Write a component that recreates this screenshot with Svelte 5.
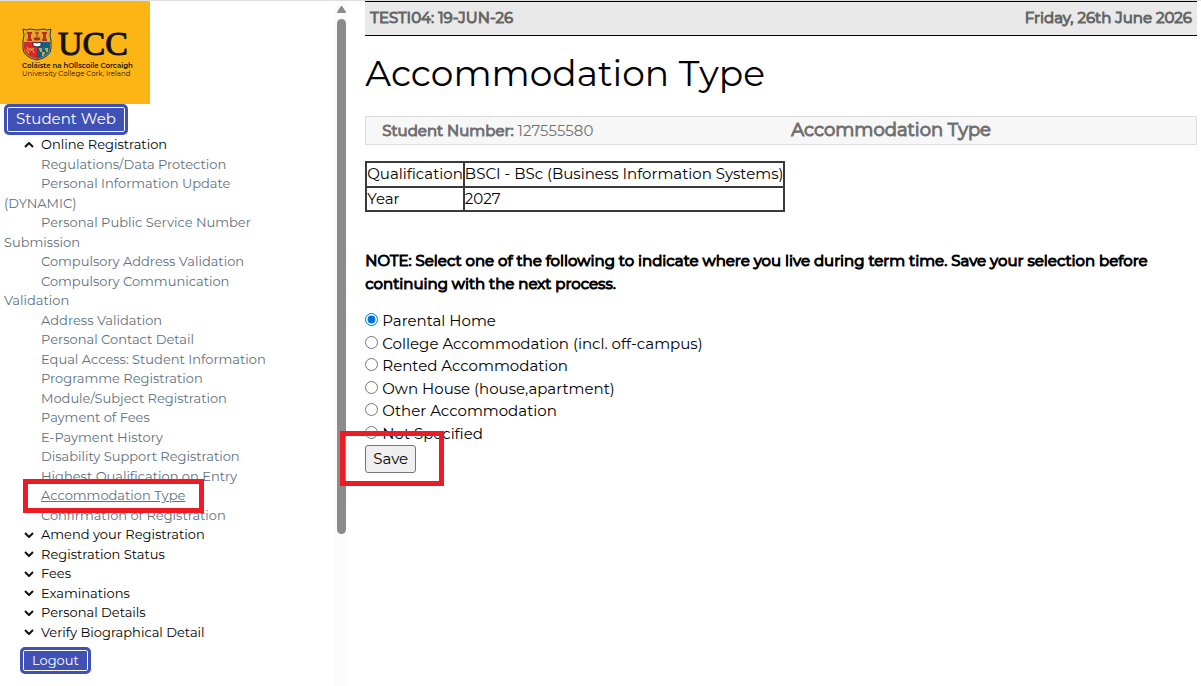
<script lang="ts">
	const steps: string[] = [
		'Regulations/Data Protection',
		'Personal Information Update (DYNAMIC)',
		'Personal Public Service Number Submission',
		'Compulsory Address Validation',
		'Compulsory Communication Validation',
		'Address Validation',
		'Personal Contact Detail',
		'Equal Access: Student Information',
		'Programme Registration',
		'Module/Subject Registration',
		'Payment of Fees',
		'E-Payment History',
		'Disability Support Registration',
		'Highest Qualification on Entry',
		'Accommodation Type',
		'Confirmation of Registration'
	];

	const sections: { title: string; items: string[] }[] = [
		{ title: 'Online Registration', items: steps },
		{ title: 'Amend your Registration', items: [] },
		{ title: 'Registration Status', items: [] },
		{ title: 'Fees', items: [] },
		{ title: 'Examinations', items: [] },
		{ title: 'Personal Details', items: [] },
		{ title: 'Verify Biographical Detail', items: [] }
	];

	const options: string[] = [
		'Parental Home',
		'College Accommodation (incl. off-campus)',
		'Rented Accommodation',
		'Own House (house,apartment)',
		'Other Accommodation',
		'Not Specified'
	];

	let current = $state('Accommodation Type');
	let selected = $state('Parental Home');
</script>

<div class="page">
	<aside class="sidebar">
		<div class="nav">
			<div class="logo">
				<div class="logo-top">
					<svg class="crest" width="30" height="33" viewBox="0 0 30 33" aria-hidden="true">
						<path d="M1 1Q5 3 8 1Q15 3 22 1Q25 3 29 1Q27 7 29 13V20Q29 29 15 32Q1 29 1 20V13Q3 7 1 1Z" fill="#e9b52d" stroke="#24304a" />
						<path d="M3 3H27V14H3Z" fill="#e5a52b" />
						<path d="M5 4H10V6H9V11H10V13H5V11H6V6H5ZM20 4H25V6H24V11H25V13H20V11H21V6H20Z" fill="#b92f24" />
						<path d="M15 4V9M13 5H17M12 10H18L17 12H13Z" fill="#a52c25" stroke="#a52c25" />
						<path d="M2 14H15V31Q2 28 2 20Z" fill="#d4292d" />
						<path d="M15 14H28V20Q28 28 15 31Z" fill="#12617f" />
						<path d="M5 19L6 21H11L12 20M5 21V24M7 22H11L12 25M7 23L6 26" fill="none" stroke="#f0a535" />
						<path d="M17 21H20M23 21H26M20 25H23M18 23H20M24 23H26M20 27H22" stroke="#c9a64b" stroke-width="2" />
						<path d="M11 14L15 15L19 14V18L15 19L11 18Z" fill="#fff" stroke="#252f43" />
					</svg>
					<span class="logo-name">UCC</span>
				</div>
				<div class="logo-irish">Coláiste na hOllscoile Corcaigh</div>
				<div class="logo-english">University College Cork, Ireland</div>
			</div>

			<button type="button" class="nav-button home">Student Web</button>

			<ul class="menu">
				{#each sections as section}
					<li>
						<a href="#menu" class="section">
							<svg class="chevron" width="10" height="6" viewBox="0 0 10 6" aria-hidden="true">
								<path d={section.items.length ? 'M1 5L5 1L9 5' : 'M1 1L5 5L9 1'} />
							</svg>
							{section.title}
						</a>
						{#if section.items.length}
							<ul>
								{#each section.items as item}
									<li class="item" class:current={item === current}>
										<a href="#step" onclick={() => (current = item)}>{item}</a>
									</li>
								{/each}
							</ul>
						{/if}
					</li>
				{/each}
			</ul>

			<button type="button" class="nav-button logout">Logout</button>
		</div>

		<div class="scrollbar" aria-hidden="true">
			<svg width="9" height="7" viewBox="0 0 9 7"><path d="M4 0H5L9 6Q9 7 8 7H1Q0 7 0 6Z" fill="#8b8b8b" /></svg>
			<div class="thumb"></div>
		</div>
	</aside>

	<main>
		<header class="topbar">
			<span>TESTI04: 19-JUN-26</span>
			<span>Friday, 26th June 2026</span>
		</header>

		<h1>Accommodation Type</h1>

		<div class="student">
			<div><b>Student Number:</b> 127555580</div>
			<h2>Accommodation Type</h2>
		</div>

		<table>
			<tbody>
				<tr>
					<th scope="row">Qualification</th>
					<td>BSCI - BSc (Business Information Systems)</td>
				</tr>
				<tr>
					<th scope="row">Year</th>
					<td>2027</td>
				</tr>
			</tbody>
		</table>

		<form onsubmit={(e) => e.preventDefault()}>
			<p class="note" id="note">
				NOTE: Select one of the following to indicate where you live during term time. Save your
				selection before continuing with the next process.
			</p>
			<div role="radiogroup" aria-labelledby="note">
				{#each options as option}
					<label>
						<input type="radio" name="accommodation" value={option} bind:group={selected} />
						{option}
					</label>
				{/each}
			</div>
			<div class="actions">
				<button type="submit" class="save">Save</button>
			</div>
		</form>
	</main>
</div>

<style>
	:global(body) {
		margin: 0;
		background: #fff;
	}

	.page {
		display: flex;
		box-sizing: border-box;
		min-height: 100vh;
		border-top: 1px solid #dedede;
		font-family: Montserrat, Inter, sans-serif;
		font-size: 15px;
		line-height: 150%;
		color: #000;
	}

	.sidebar {
		display: flex;
		flex: 0 0 calc(29% + 1px);
	}

	.nav {
		flex: 1;
		min-width: 0;
	}

	.logo {
		box-sizing: border-box;
		width: 150px;
		height: 103px;
		padding: 25px 0 0 22px;
		background: #fdb515;
		color: #14120c;
		white-space: nowrap;
	}

	.logo-top {
		display: flex;
		align-items: center;
		gap: 6px;
		height: 36px;
	}

	.logo-name {
		font-family: 'Liberation Serif', serif;
		font-size: 34px;
		line-height: 36px;
		-webkit-text-stroke: 1px #14120c;
	}

	.logo-irish,
	.logo-english {
		font-size: 7px;
		line-height: 8px;
	}

	.logo-irish {
		font-weight: 600;
	}

	.nav-button {
		display: block;
		border: 3px solid #3f51b5;
		border-radius: 5px;
		background: #3f51b5;
		box-shadow: inset 0 0 0 1px #fff;
		color: #fff;
		font-family: inherit;
		cursor: pointer;
	}

	.home {
		margin-left: 4px;
		padding: 0 9px 1px;
		font-size: 15px;
		line-height: 24px;
	}

	.logout {
		margin: 5px 0 0 20px;
		padding: 0 9px;
		font-size: 13px;
		line-height: 21px;
	}

	.menu,
	.menu ul {
		margin: 0;
		padding: 0;
		list-style: none;
	}

	.menu {
		padding: 0 52px 0 4px;
		font-size: 13px;
		line-height: 150%;
	}

	.menu a {
		text-decoration: none;
	}

	.section {
		display: flex;
		align-items: center;
		gap: 7px;
		padding-left: 20px;
		color: #000;
	}

	.chevron {
		fill: none;
		stroke: #111;
		stroke-width: 2;
	}

	.item {
		text-indent: 37px;
	}

	.item a {
		color: #607080;
	}

	.item a:hover,
	.current a {
		text-decoration: underline;
	}

	.current,
	.actions {
		position: relative;
	}

	/* red frames laid over the step and its save button */
	.current::after,
	.actions::after {
		content: '';
		position: absolute;
		box-sizing: border-box;
		border: 5px solid #ed1c24;
		pointer-events: none;
	}

	.current::after {
		top: -7px;
		left: 19px;
		width: 181px;
		height: 34px;
	}

	.actions::after {
		top: -14px;
		left: -25px;
		width: 104px;
		height: 55px;
	}

	.scrollbar {
		display: flex;
		flex-direction: column;
		align-items: center;
		gap: 6px;
		width: 15px;
		padding-top: 5px;
		background: #fcfcfc;
	}

	.thumb {
		width: 9px;
		height: 75vh;
		border-radius: 5px;
		background: #8b8b8b;
	}

	main {
		flex: 1;
		min-width: 0;
		padding: 0 4px 0 16px;
	}

	.topbar {
		display: flex;
		justify-content: space-between;
		padding: 4px 5px 6px;
		border: solid #000;
		border-width: 1px 0;
		background: #e9e9e9;
		color: #666;
		line-height: 23px;
	}

	h1 {
		margin: 9px 0 15px;
		font-size: 36px;
		font-weight: 400;
		line-height: 56px;
	}

	.student {
		display: grid;
		grid-template-columns: 1fr 1fr;
		align-items: center;
		padding: 0 16px;
		border: 1px solid #ddd;
		background: #f7f7f7;
		color: #707070;
		line-height: 27px;
	}

	h2 {
		margin: 0;
		padding-left: 10px;
		font-size: 18px;
	}

	/* heavier text that keeps the regular weight's widths */
	.topbar,
	.note,
	b,
	h2 {
		font-weight: 400;
		-webkit-text-stroke: 1px currentColor;
	}

	table {
		margin-top: 16px;
		border-collapse: collapse;
	}

	th,
	td {
		padding: 0;
		border: 2px solid #3a3a3a;
		font-weight: 400;
		text-align: left;
	}

	.note {
		margin: 38px 0 15px;
	}

	label {
		display: flex;
		align-items: center;
		gap: 4px;
	}

	input {
		width: 13px;
		height: 13px;
		margin: 0 0 3px;
		accent-color: #0075d7;
	}

	.save {
		display: block;
		padding: 2px 7px;
		border: 1px solid #767676;
		border-radius: 3px;
		background: #efefef;
		color: #000;
		font-family: inherit;
		font-size: 15px;
		line-height: 22px;
	}
</style>
